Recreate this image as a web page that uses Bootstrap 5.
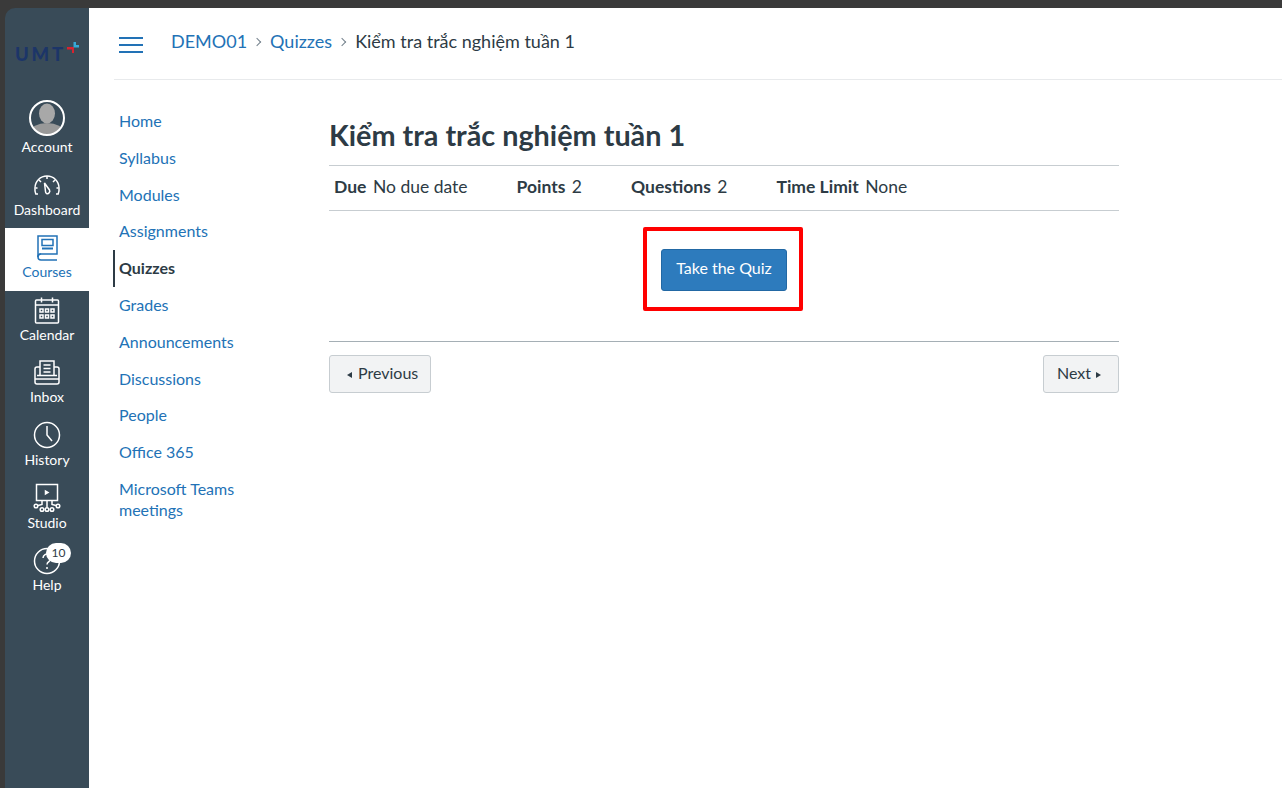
<!DOCTYPE html>
<html lang="en">
<head>
<meta charset="UTF-8">
<title>Kiểm tra trắc nghiệm tuần 1</title>
<link href="https://cdn.jsdelivr.net/npm/bootstrap@5.3.0/dist/css/bootstrap.min.css" rel="stylesheet">
<style>
html, body { height: 100%; overflow: hidden; }
body { background: #3a3a3a; font-family: Lato, "Noto Sans", sans-serif; color: #2d3b45; font-size: 16px; }
a { text-decoration: none; color: #2272b6; }
.app-shell { height: 780px; margin-top: 8px; padding-left: 5px; }
.side-nav { width: 84px; background: #394b58; border-top-left-radius: 10px; flex-shrink: 0; }
.logo-box { height: 83px; padding: 36px 0 0 10px; }
.logo-text { font-size: 18.500px; font-weight: 900; letter-spacing: 2.800px; color: #1c3568; line-height: 20px; }
.logo-plus { margin-top: -2px; margin-left: 1px; }
.side-item { height: 62.6px; color: #fff; font-size: 14px; line-height: 18px; }
.side-item svg { width: 30px; height: 30px; margin-top: 5px; margin-bottom: 0.6px; fill: none; stroke: #fff; stroke-width: 1.5; }
.side-item.is-active { background: #fff; color: #2272b6; height: 63.2px; margin-bottom: -0.6px; }
.side-item.is-active svg { stroke: #2272b6; }
.side-item.is-account { height: 74px; }
.side-item.is-account svg { width: 38px; height: 38px; margin-top: 8px; margin-bottom: 1px; }
.help-count { top: 2.5px; left: 41px; width: 25px; height: 20px; border-radius: 10px; background: #fff; color: #2d3b45; font-size: 12px; line-height: 20px; }
.main-area { min-width: 0; background: #fff; }
.crumb-bar { height: 72px; margin-left: 25px; border-bottom: 1px solid #e8eaec; }
.burger { width: 24px; height: 16px; margin-left: 5px; margin-right: 28px; margin-top: 2px; border-top: 2px solid #2272b6; border-bottom: 2px solid #2272b6; }
.burger::after { content: ""; display: block; height: 2px; background: #2272b6; margin-top: 5px; }
.crumb-text { font-size: 18px; line-height: 24px; margin-top: -6px; }
.crumb-sep { width: 6px; height: 6px; border-top: 1px solid #73818c; border-right: 1px solid #73818c; transform: rotate(45deg); margin: 2px 10px 0 7px; }
.course-menu { width: 216px; padding-top: 21.9px; margin-left: 24px; flex-shrink: 0; }
.course-menu a { display: block; padding: 8px 60px 8px 4px; border-left: 2px solid transparent; line-height: 21px; margin-bottom: -0.2px; }
.course-menu a.is-current { color: #2d3b45; font-weight: 700; border-left-color: #2d3b45; margin-top: 1px; margin-bottom: -1.2px; padding-top: 7px; padding-bottom: 9px; }
.quiz-col { width: 790px; padding-top: 36px; }
.quiz-title { font-size: 28.8px; font-weight: 700; line-height: 38px; margin: 0; padding-bottom: 11px; border-bottom: 1px solid #c7cdd1; color: #2d3b45; }
.quiz-meta { height: 45px; border-bottom: 1px solid #c7cdd1; padding: 0 0 2px 5px; font-size: 17.5px; }
.quiz-meta div { margin-right: 49px; }
.quiz-meta b { margin-right: 2px; font-weight: 700; }
.mark-box { width: 160px; height: 84px; border: 4px solid #f00; border-radius: 2px; margin: 16px 0 0 314px; padding: 2px 0 0 2px; }
.take-btn { background: #2d7bbd; border: 1px solid #2268a4; color: #fff; width: 126px; height: 42px; border-radius: 3px; font-size: 16px; padding: 0 0 4px; }
.take-btn:hover { background: #2d7bbd; color: #fff; }
.pager { margin-top: 30px; padding-top: 13px; border-top: 1px solid #a5afb5; }
.pager-btn { height: 38px; background: #f2f3f4; border: 1px solid #c7cdd1; color: #2d3b45; border-radius: 3px; font-size: 16px; padding: 0 13px 2px; line-height: 34px; }
.pager-btn:hover { background: #f2f3f4; }
.pager-prev { padding-right: 12px; }
.tri-l, .tri-r { display: inline-block; width: 0; height: 0; border-top: 3.5px solid transparent; border-bottom: 3.5px solid transparent; vertical-align: 1px; }
.tri-l { border-right: 5px solid #2d3b45; margin: 0 6px 0 4px; }
.tri-r { border-left: 5px solid #2d3b45; margin: 0 4px 0 5px; }
</style>
</head>
<body>
<div class="app-shell d-flex">
  <nav class="side-nav d-flex flex-column">
    <div class="logo-box d-flex align-items-start">
      <span class="logo-text">UMT</span>
      <svg class="logo-plus" width="12" height="12" viewBox="0 0 12 12">
        <path d="M0 5h7v6H5V7.500H0z" fill="#d8232f"/>
        <path d="M6.500 0h2.500v3H12v2.500H6.500z" fill="#36a9d6"/>
      </svg>
    </div>
    <a class="side-item is-account d-flex flex-column align-items-center" href="#">
      <svg viewBox="0 0 38 38" style="stroke:none">
        <defs><clipPath id="avatarClip"><circle cx="19" cy="19" r="16.5"/></clipPath></defs>
        <g clip-path="url(#avatarClip)">
          <rect width="38" height="38" fill="#394b58"/>
          <ellipse cx="19" cy="14.500" rx="8" ry="10" fill="#a8a8a8"/>
          <ellipse cx="19" cy="33" rx="17" ry="9" fill="#999"/>
        </g>
        <circle cx="19" cy="19" r="17" fill="none" stroke="#fff" stroke-width="2"/>
      </svg>
      <span>Account</span>
    </a>
    <a class="side-item d-flex flex-column align-items-center" href="#">
      <svg viewBox="0 0 30 30">
        <path d="M6 24H3.800a12 12 0 0 1-.8-6A12 12 0 0 1 27 18a12 12 0 0 1-.8 6H24"/>
        <path d="M15 6v3M7 10l2 2M23 10l-2 2M3.500 18h2M26.500 18h-2"/>
        <path d="M12.500 13l5 7a2.500 2.500 0 0 1-3 3.500a2.500 2.500 0 0 1-1-2z" />
      </svg>
      <span>Dashboard</span>
    </a>
    <a class="side-item is-active d-flex flex-column align-items-center" href="#">
      <svg viewBox="0 0 30 30">
        <path d="M6 24V3h19v18H9a2.500 2.500 0 0 0 0 6h16" />
        <path d="M6 24a2.500 2.500 0 0 1 3-3" />
        <rect x="10" y="6.500" width="11" height="6" />
        <path d="M10 15.500h11" stroke-width="2"/>
      </svg>
      <span>Courses</span>
    </a>
    <a class="side-item d-flex flex-column align-items-center" href="#">
      <svg viewBox="0 0 30 30">
        <rect x="3.500" y="5" width="23" height="23" rx="1" />
        <path d="M3.500 10h23M9.500 2.500v5M20.500 2.500v5" />
        <path d="M8 14h3v3H8zM13.500 14h3v3h-3zM19 14h3v3h-3zM8 20h3v3H8zM13.500 20h3v3h-3zM19 20h3v3h-3z" />
      </svg>
      <span>Calendar</span>
    </a>
    <a class="side-item d-flex flex-column align-items-center" href="#">
      <svg viewBox="0 0 30 30">
        <path d="M8 17V3h14v14" />
        <path d="M11.500 7h7M11.500 10.500h7M11.500 14h7" />
        <path d="M8 9H5a2 2 0 0 0-2 2v13a2 2 0 0 0 2 2h20a2 2 0 0 0 2-2V11a2 2 0 0 0-2-2H22" />
        <path d="M3 21h24M5 17.500h20" />
      </svg>
      <span>Inbox</span>
    </a>
    <a class="side-item d-flex flex-column align-items-center" href="#">
      <svg viewBox="0 0 30 30">
        <circle cx="15" cy="15" r="12.500" />
        <path d="M15 6v9l5 6" />
      </svg>
      <span>History</span>
    </a>
    <a class="side-item d-flex flex-column align-items-center" href="#">
      <svg viewBox="0 0 30 30">
        <rect x="4.500" y="1.500" width="21" height="16" />
        <path d="M13.500 8v3l2.500-1.500z" fill="#fff" />
        <path d="M15 17.500v7M10 17.500v4l-4 1M20 17.500v4l4 1" />
        <circle cx="15" cy="26.500" r="1.800" /><circle cx="10" cy="26.500" r="1.800" /><circle cx="20" cy="26.500" r="1.800" />
        <circle cx="4" cy="23" r="1.800" /><circle cx="26" cy="23" r="1.800" />
      </svg>
      <span>Studio</span>
    </a>
    <a class="side-item d-flex flex-column align-items-center position-relative" href="#">
      <svg viewBox="0 0 30 30">
        <circle cx="15" cy="15" r="12.500" />
        <path d="M11 12a4 4 0 1 1 6 3.500c-1.300.8-2 1.500-2 3" />
        <path d="M15 21v2" />
      </svg>
      <span>Help</span>
      <span class="help-count position-absolute text-center">10</span>
    </a>
  </nav>
  <div class="main-area flex-grow-1 d-flex flex-column">
    <header class="crumb-bar d-flex align-items-center">
      <span class="burger"></span>
      <div class="crumb-text d-flex align-items-center">
        <a href="#">DEMO01</a><span class="crumb-sep"></span>
        <a href="#">Quizzes</a><span class="crumb-sep"></span>
        <span>Kiểm tra trắc nghiệm tuần 1</span>
      </div>
    </header>
    <div class="d-flex">
      <div class="course-menu">
        <a href="#">Home</a>
        <a href="#">Syllabus</a>
        <a href="#">Modules</a>
        <a href="#">Assignments</a>
        <a href="#" class="is-current">Quizzes</a>
        <a href="#">Grades</a>
        <a href="#">Announcements</a>
        <a href="#">Discussions</a>
        <a href="#">People</a>
        <a href="#">Office 365</a>
        <a href="#">Microsoft Teams meetings</a>
      </div>
      <main class="quiz-col">
        <h1 class="quiz-title">Kiểm tra trắc nghiệm tuần 1</h1>
        <div class="quiz-meta d-flex align-items-center">
          <div><b>Due</b> No due date</div>
          <div><b>Points</b> 2</div>
          <div><b>Questions</b> 2</div>
          <div><b>Time Limit</b> None</div>
        </div>
        <div class="mark-box d-flex align-items-center justify-content-center">
          <button class="btn take-btn" type="button">Take the Quiz</button>
        </div>
        <div class="pager d-flex justify-content-between">
          <button class="btn pager-btn pager-prev" type="button"><span class="tri-l"></span>Previous</button>
          <button class="btn pager-btn" type="button">Next<span class="tri-r"></span></button>
        </div>
      </main>
    </div>
  </div>
</div>
<script src="https://cdn.jsdelivr.net/npm/bootstrap@5.3.0/dist/js/bootstrap.bundle.min.js"></script>
</body>
</html>
